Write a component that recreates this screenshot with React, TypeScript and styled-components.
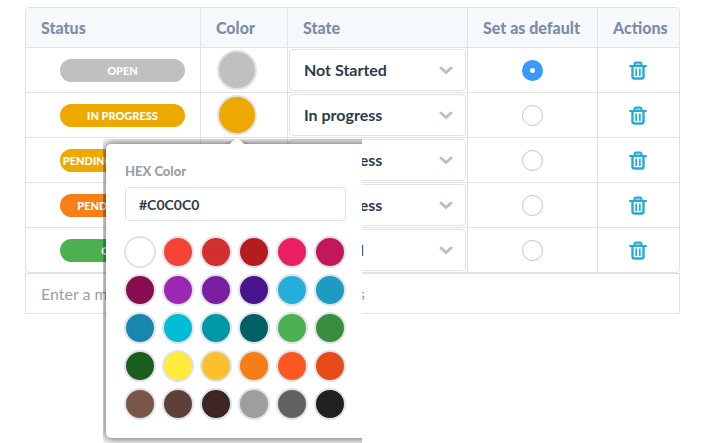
import React, { useState } from "react";
import styled, { createGlobalStyle } from "styled-components";

const Global = createGlobalStyle`
  * { box-sizing: border-box; }
  body { margin: 0; background: #fff; color: #2d3b4e; font: 400 16px/20px Lato, sans-serif; }
  button, input, select { font: inherit; color: inherit; margin: 0; }
`;

const line = "#dfe2e9";

const Page = styled.main`
  min-height: 100vh;
  padding: 7px 29px 0 25px;
`;

const StatusTable = styled.table`
  width: 100%;
  table-layout: fixed;
  border-collapse: separate;
  border-spacing: 0;
  border: 1px solid ${line};
  border-radius: 4px;
`;

const Col = styled.col<{ $width?: number }>`
  width: ${(p) => (p.$width ? `${p.$width}px` : "auto")};
`;

const HeadCell = styled.th`
  height: 40px;
  padding: 0 0 0 15px;
  background: #f5f9fc;
  border-bottom: 1px solid ${line};
  color: #7b8ea8;
  font-weight: 900;
  text-align: left;
  white-space: nowrap;
  & + & { border-left: 1px solid ${line}; }
  &:first-child { border-top-left-radius: 4px; }
  &:last-child { border-top-right-radius: 4px; }
`;

const Cell = styled.td`
  height: 45px;
  padding: 0 1px;
  text-align: center;
  vertical-align: middle;
  & + & { border-left: 1px solid ${line}; }
  tr:not(:last-child) > & { border-bottom: 1px solid ${line}; }
  tr:last-child > & { height: 44px; }
`;

const Badge = styled.span<{ $color: string }>`
  display: block;
  margin: 0 14px 0 33px;
  height: 23px;
  border-radius: 12px;
  background: ${(p) => p.$color};
  color: #fff;
  font-size: 11px;
  font-weight: 900;
  line-height: 24px;
  white-space: nowrap;
`;

const Anchor = styled.div`
  position: relative;
  display: flex;
  justify-content: center;
  padding-right: 14px;
`;

const Swatch = styled.button<{ $color: string; $size: number }>`
  flex: none;
  width: ${(p) => p.$size}px;
  height: ${(p) => p.$size}px;
  padding: 0;
  border: 2px solid ${line};
  border-radius: 50%;
  background: ${(p) => p.$color};
  cursor: pointer;
`;

const SelectBox = styled.div`
  position: relative;
`;

const Select = styled.select`
  display: block;
  width: 100%;
  height: 42px;
  padding: 0 40px 0 14px;
  appearance: none;
  background: #fff;
  border: 1px solid ${line};
  border-radius: 4px;
  font-weight: 700;
`;

const Chevron = styled.svg`
  position: absolute;
  right: 13px;
  top: 17px;
  pointer-events: none;
`;

const Radio = styled.input`
  display: block;
  width: 21px;
  height: 21px;
  margin: 0 auto;
  appearance: none;
  border: 1px solid #c4c4c4;
  border-radius: 50%;
  background: #fff;
  &:checked { border: 8px solid #3b99fc; }
`;

const IconButton = styled.button`
  display: flex;
  margin: 0 auto;
  padding: 0 2px 0 0;
  border: 0;
  background: none;
  cursor: pointer;
`;

const NewStatus = styled.input`
  display: block;
  width: 100%;
  height: 41px;
  padding: 0 15px;
  border: 1px solid ${line};
  background: #fff;
  &::placeholder { color: #9a9fa8; opacity: 1; }
`;

const Popover = styled.div`
  position: absolute;
  z-index: 2;
  top: 44px;
  left: -99px;
  width: 259px;
  padding: 5px 0 5px 3px;
  overflow: hidden;
  text-align: left;
`;

const Arrow = styled.svg`
  position: absolute;
  z-index: 1;
  top: 0;
  left: 125px;
`;

const Panel = styled.div`
  width: 280px;
  padding: 17px 37px 18px 19px;
  border-radius: 5px;
  background: #fff;
  box-shadow: 0 0 8px 2px rgba(0, 0, 0, 0.55);
`;

const HexLabel = styled.label`
  display: block;
  color: #9a9fa8;
  font-size: 13px;
  font-weight: 900;
`;

const HexInput = styled.input`
  display: block;
  width: 221px;
  height: 34px;
  margin-top: 6px;
  padding: 0 13px;
  border: 1px solid ${line};
  border-radius: 4px;
  font-size: 14px;
  font-weight: 700;
`;

const Palette = styled.div`
  display: grid;
  grid-template-columns: repeat(6, 32px);
  gap: 6px;
  margin: 15px 0 0 -1px;
`;

const statuses = [
  { name: "OPEN", color: "#c0c0c0", state: "Not Started" },
  { name: "IN PROGRESS", color: "#eea900", state: "In progress" },
  { name: "PENDING CUSTOMERS", color: "#eea900", state: "In progress" },
  { name: "PENDING CLIENT", color: "#f67f17", state: "In progress" },
  { name: "CLOSED", color: "#4caf50", state: "Finished" },
];

const palette = [
  "#ffffff", "#f44336", "#d32f2f", "#b71c1c", "#e91e63", "#c2185b",
  "#880e4f", "#9c27b0", "#7b1fa2", "#4a148c", "#26aedb", "#1e9bc1",
  "#1787ac", "#00bcd4", "#0097a7", "#006064", "#4caf50", "#388e3c",
  "#1b5e20", "#ffeb3b", "#fbc02d", "#f57f17", "#ff5722", "#e64a19",
  "#795548", "#5d4037", "#3e2723", "#9e9e9e", "#616161", "#212121",
];

const Trash = () => (
  <svg width="18" height="19" viewBox="0 0 18 19" fill="none" stroke="#22acd9" aria-hidden="true">
    <path d="M5.5 4V3Q5.5 1.5 7 1.5h4Q12.500 1.500 12.500 3V4" strokeWidth="2" fill="#a9cfe0" />
    <path d="M1 5h16" strokeWidth="2" strokeLinecap="round" />
    <path d="M3.500 5v10.500Q3.500 17.500 5.500 17.500h7q2 0 2-2V5" strokeWidth="2.400" />
    <path d="M7.200 7.500v7.500M10.800 7.500v7.500" strokeWidth="1.800" />
  </svg>
);

function ColorPopover() {
  const [hex, setHex] = useState("#C0C0C0");
  return (
    <Popover>
      <Arrow width="18" height="6" viewBox="0 0 18 6" aria-hidden="true">
        <path d="M0 6Q3 4 6 1Q9-1 12 1Q15 4 18 6Z" fill="#fff" />
      </Arrow>
      <Panel>
        <HexLabel htmlFor="hex">HEX Color</HexLabel>
        <HexInput id="hex" value={hex} onChange={(e) => setHex(e.target.value)} />
        <Palette>
          {palette.map((c) => (
            <Swatch key={c} type="button" $color={c} $size={32} aria-label={c} onClick={() => setHex(c.toUpperCase())} />
          ))}
        </Palette>
      </Panel>
    </Popover>
  );
}

export default function App() {
  const [selected, setSelected] = useState(0);
  const [open, setOpen] = useState(1);
  return (
    <Page>
      <Global />
      <StatusTable>
        <colgroup>
          <Col />
          <Col $width={87} />
          <Col $width={180} />
          <Col $width={130} />
          <Col $width={82} />
        </colgroup>
        <thead>
          <tr>
            {["Status", "Color", "State", "Set as default", "Actions"].map((h) => (
              <HeadCell key={h} scope="col">{h}</HeadCell>
            ))}
          </tr>
        </thead>
        <tbody>
          {statuses.map((s, i) => (
            <tr key={s.name}>
              <Cell><Badge $color={s.color}>{s.name}</Badge></Cell>
              <Cell>
                <Anchor>
                  <Swatch type="button" $color={s.color} $size={40} aria-label={`Color of ${s.name}`} onClick={() => setOpen(open === i ? -1 : i)} />
                  {open === i && <ColorPopover />}
                </Anchor>
              </Cell>
              <Cell>
                <SelectBox>
                  <Select aria-label={`State of ${s.name}`} defaultValue={s.state}>
                    <option>Not Started</option>
                    <option>In progress</option>
                    <option>Finished</option>
                  </Select>
                  <Chevron width="14" height="9" viewBox="0 0 14 9" fill="none" stroke="#b5bfd0" strokeWidth="3" strokeLinecap="round" aria-hidden="true">
                    <path d="M2 2l5 4.500 5-4.500" />
                  </Chevron>
                </SelectBox>
              </Cell>
              <Cell>
                <Radio type="radio" name="default" aria-label={`Set ${s.name} as default`} checked={selected === i} onChange={() => setSelected(i)} />
              </Cell>
              <Cell><IconButton type="button" aria-label={`Delete ${s.name}`}><Trash /></IconButton></Cell>
            </tr>
          ))}
        </tbody>
      </StatusTable>
      <NewStatus aria-label="New status" placeholder="Enter a member name to add account statuses" />
    </Page>
  );
}
